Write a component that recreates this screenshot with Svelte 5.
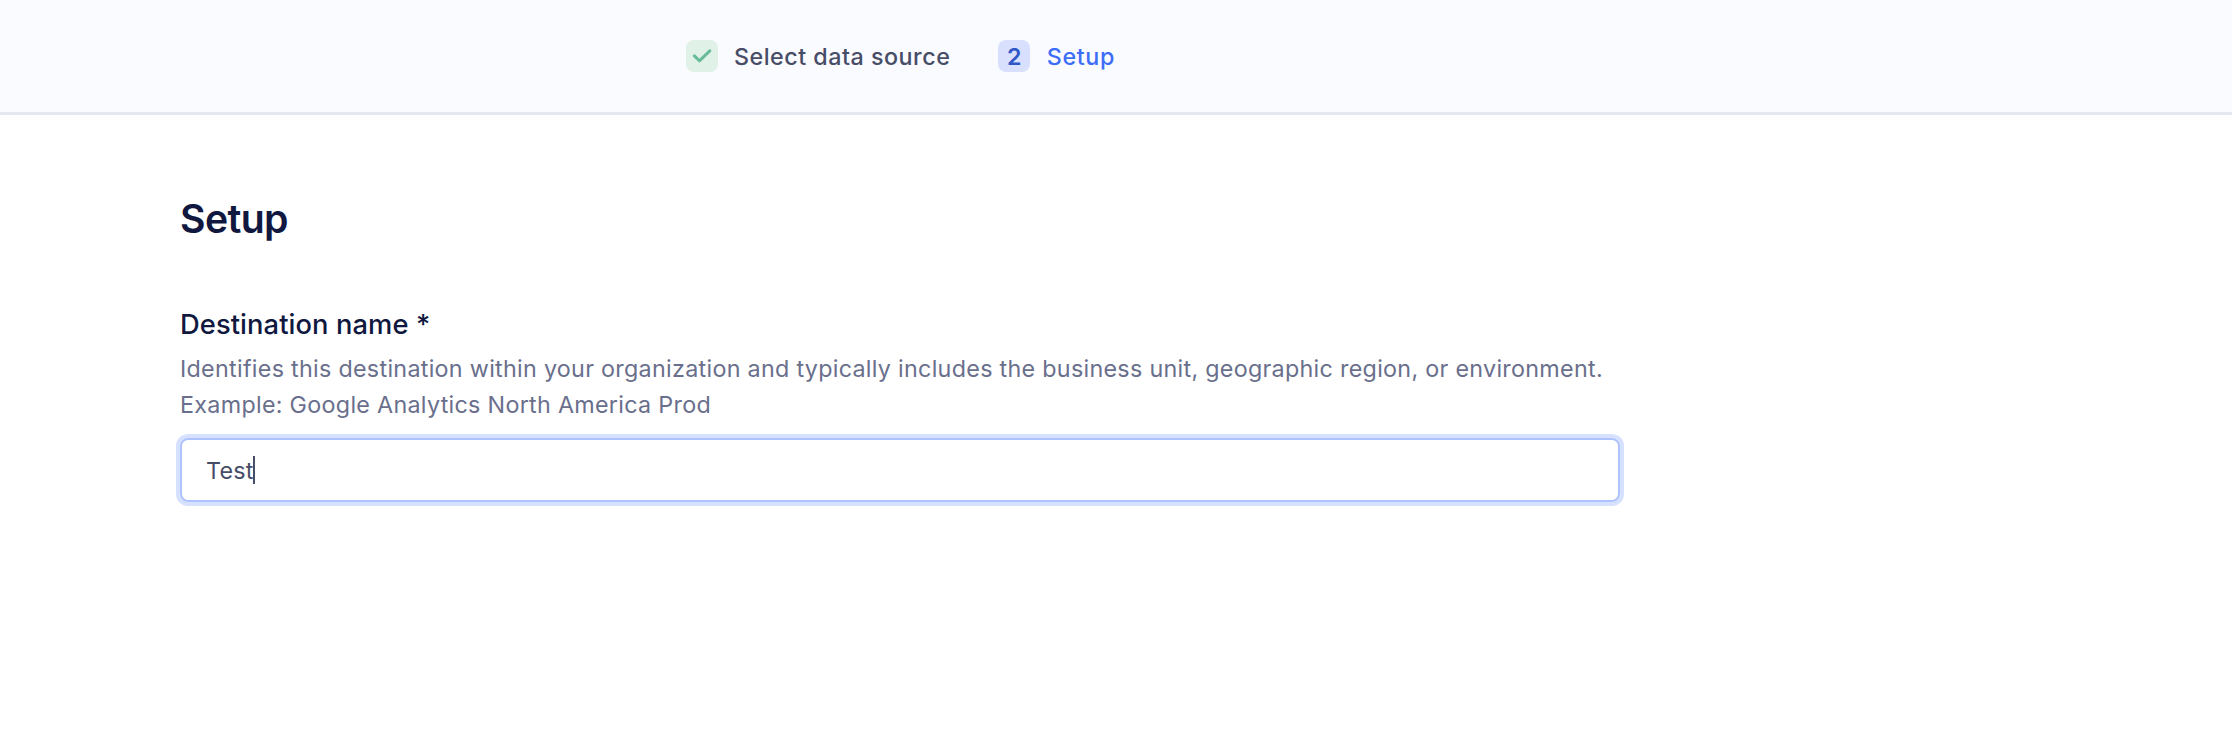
<script>
  const description = ['Identifies this destination within your organization and typically includes the business unit, geographic region, or environment.', 'Example: Google Analytics North America Prod'];
  const value = 'Test';
</script>

<div class="page">
  <header>
    <div class="step">
      <span class="badge complete"><svg viewBox="0 0 32 32" width="32" height="32"><path d="M8.4 15.9l5 4.9L23.8 10.9" /></svg></span>
      <span>Select data source</span>
    </div>
    <div class="step active">
      <span class="badge current">2</span>
      <span>Setup</span>
    </div>
  </header>
  <main>
    <h1>Setup</h1>
    <h2>Destination name *</h2>
    <p>{#each description as line}<span>{line}</span><br />{/each}</p>
    <div class="field"><span>{value}</span><i class="caret"></i></div>
  </main>
</div>

<style>
  .page { width: 2232px; height: 756px; background: #fff; font-family: Inter, sans-serif; overflow: hidden; }
  header { box-sizing: border-box; height: 115px; background: #fafbff; border-bottom: 3px solid #e6e8f0; display: flex; padding: 40px 0 0 686px; gap: 48px; }
  .step { display: flex; gap: 16px; height: 32px; line-height: 33px; font-size: 23.3px; font-weight: 500; color: #474d66; letter-spacing: 0.5px; }
  .active { gap: 16.5px; letter-spacing: 0.6px; color: #3d6df7; }
  .badge { width: 32px; height: 32px; border-radius: 8px; text-align: center; letter-spacing: 0; }
  .badge svg { display: block; fill: none; stroke: #68bb98; stroke-width: 3; stroke-linecap: round; stroke-linejoin: round; }
  .complete { background: #e0f1e8; }
  .current { background: #d8e0fd; color: #2f57c6; font-weight: 600; }
  main { padding: 79px 0 0 180px; }
  h1 { margin: 0; font-size: 39.2px; line-height: 49px; font-weight: 600; color: #101840; letter-spacing: -0.6px; }
  h2 { margin: 63px 0 0; font-size: 27.3px; line-height: 37px; font-weight: 500; color: #101840; letter-spacing: 0.09px; }
  p { margin: 7.5px 0 0; font-size: 23.3px; line-height: 36px; color: #696f8c; letter-spacing: 0.295px; white-space: nowrap; }
  .field { box-sizing: border-box; width: 1440px; height: 64px; margin-top: 15.5px; border: 2px solid #adc2ff; border-radius: 8px; box-shadow: 0 0 0 4px #d6e0ff; padding-left: 24px; display: flex; align-items: center; font-size: 23.3px; color: #474d66; }
  .field span { width: 47px; padding-top: 2px; line-height: 30px; letter-spacing: 0.2px; }
  .caret { width: 2px; height: 28px; background: #474d66; }
</style>
